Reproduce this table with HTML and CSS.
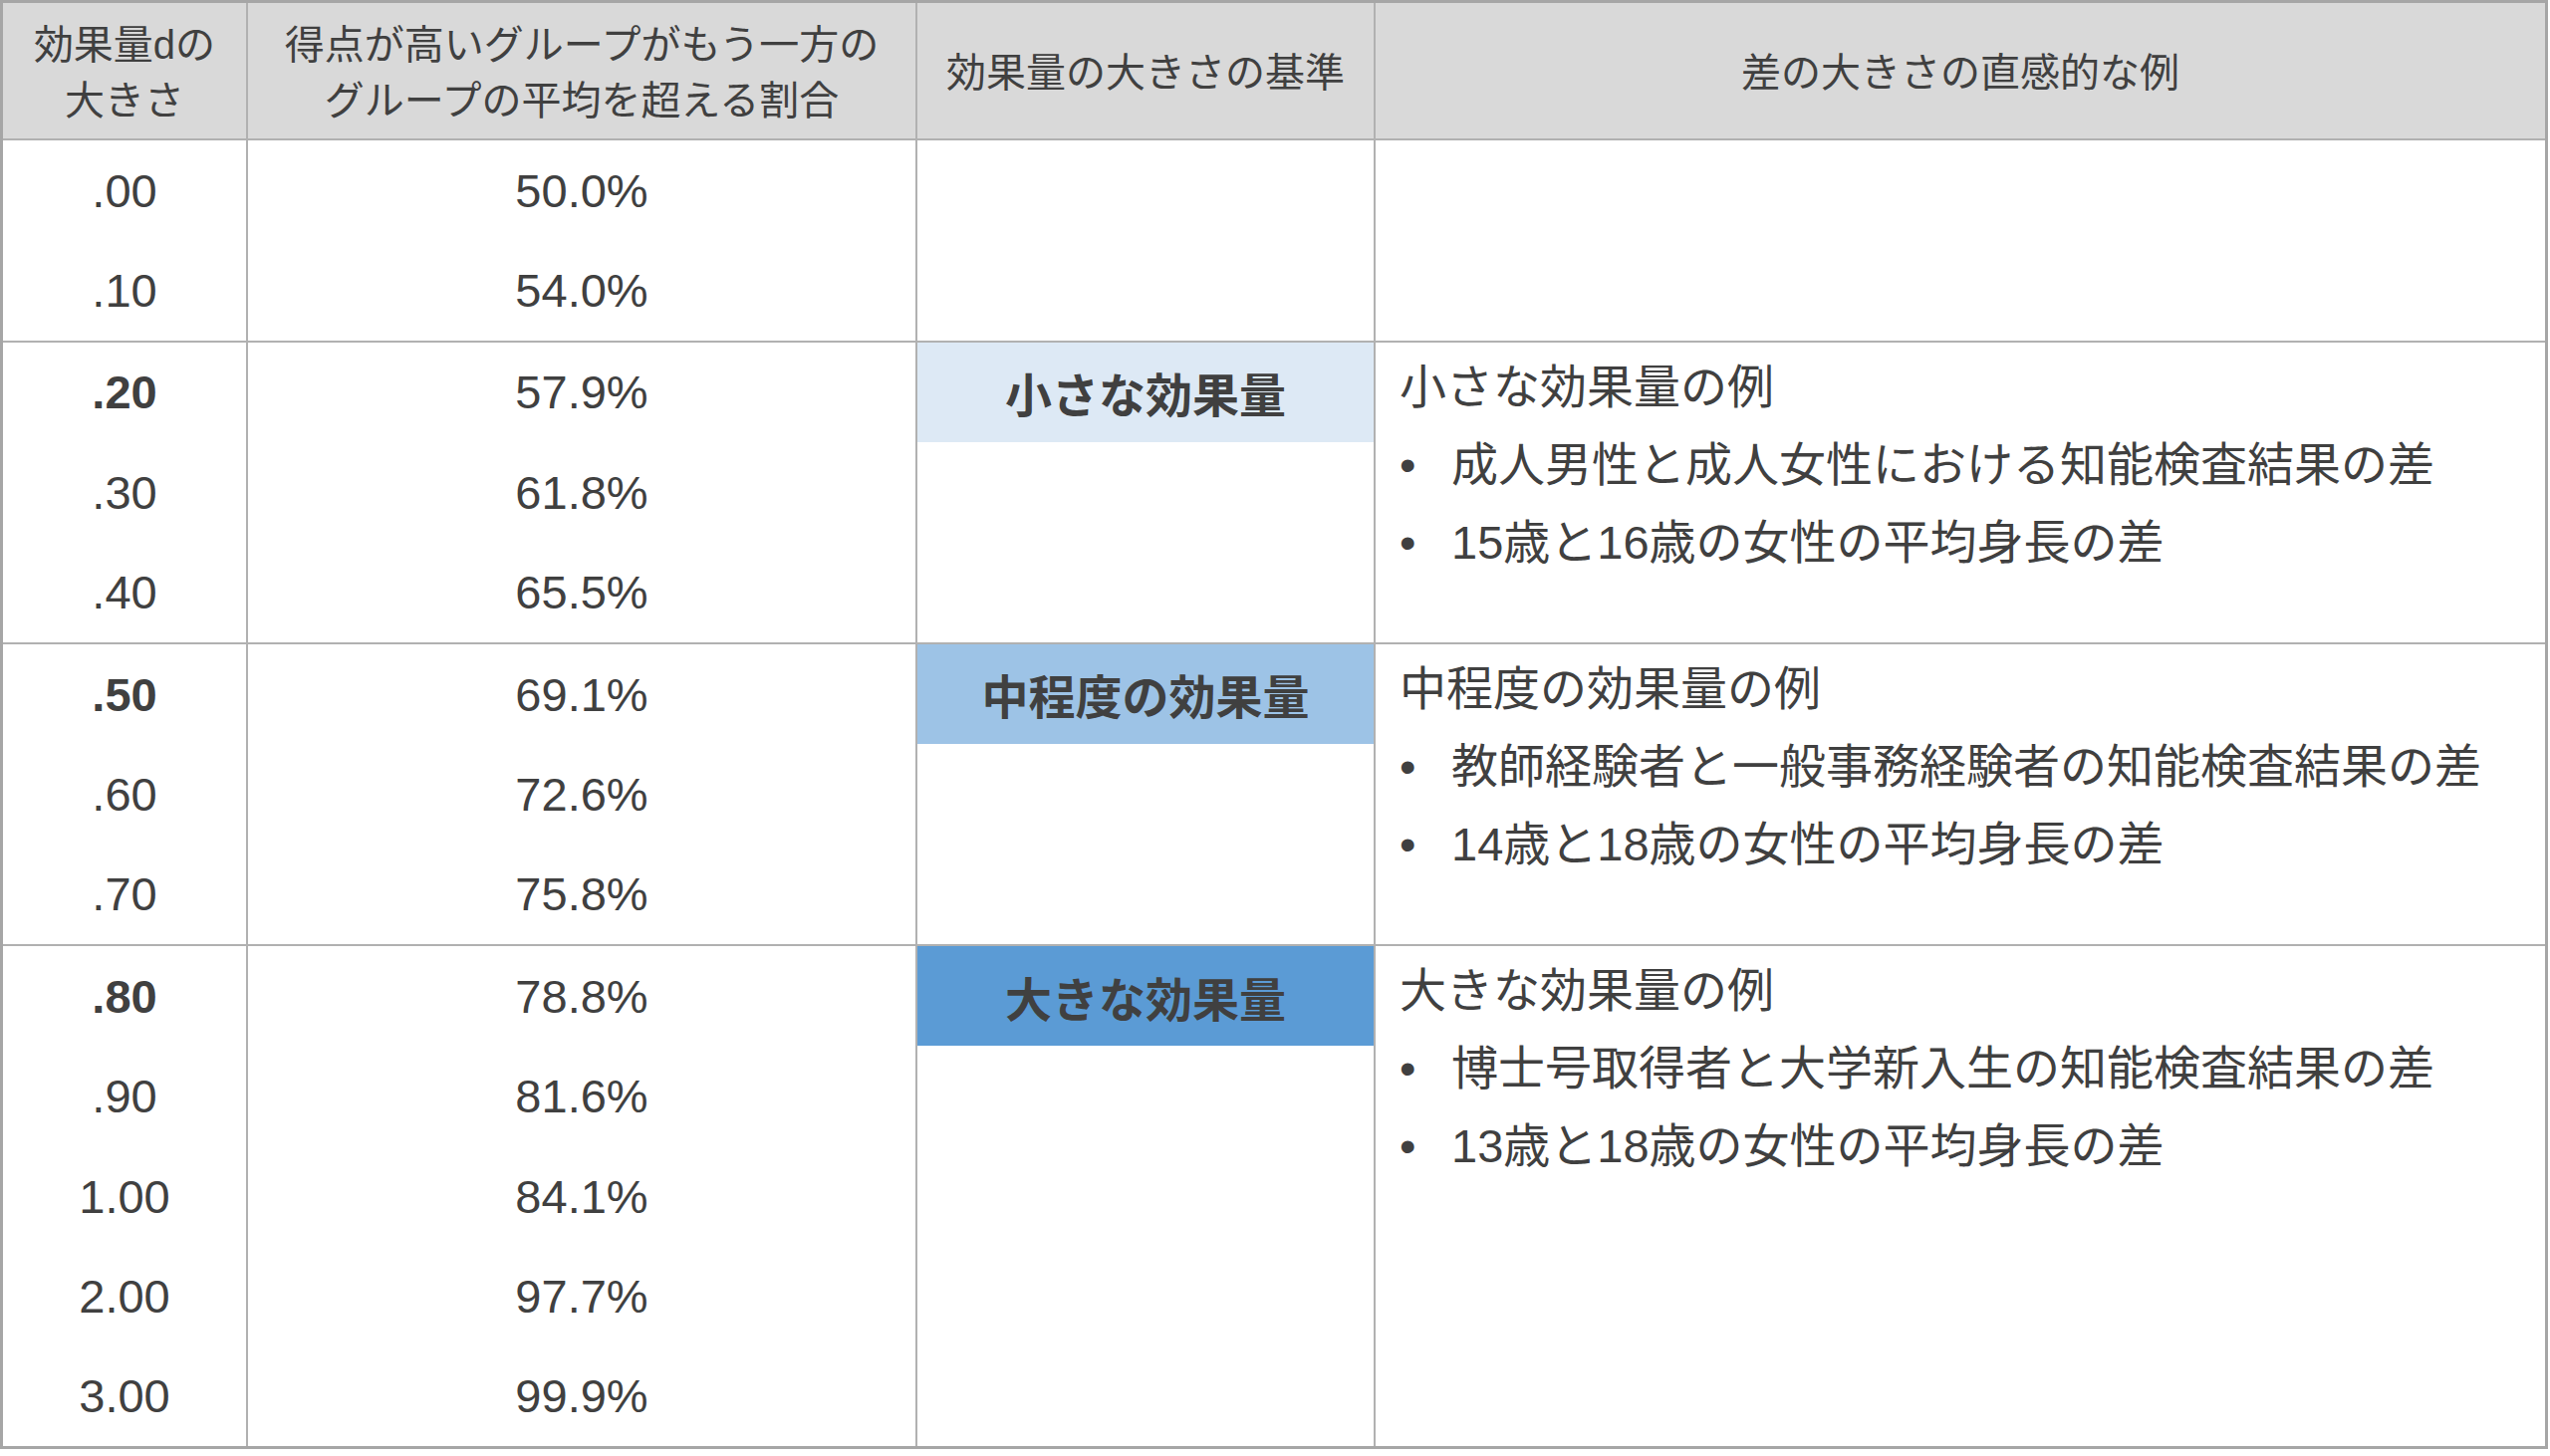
FILE: index.html
```html
<!DOCTYPE html>
<html lang="ja">
<head>
<meta charset="utf-8">
<title>効果量の大きさ</title>
<link rel="stylesheet" href="styles.css">
</head>
<body>
<div class="tbl">
  <div class="head">
    <div class="hc c1">効果量dの<br>大きさ</div>
    <div class="hc c2">得点が高いグループがもう一方の<br>グループの平均を超える割合</div>
    <div class="hc c3">効果量の大きさの基準</div>
    <div class="hc c4">差の大きさの直感的な例</div>
  </div>

  <div class="group">
    <div class="col c1"><div class="r">.00</div><div class="r">.10</div></div>
    <div class="col c2"><div class="r">50.0%</div><div class="r">54.0%</div></div>
    <div class="col c3"></div>
    <div class="col c4"></div>
  </div>

  <div class="group">
    <div class="col c1"><div class="r b">.20</div><div class="r">.30</div><div class="r">.40</div></div>
    <div class="col c2"><div class="r">57.9%</div><div class="r">61.8%</div><div class="r">65.5%</div></div>
    <div class="col c3"><div class="badge small">小さな効果量</div></div>
    <div class="col c4">
      <div class="ex-title">小さな効果量の例</div>
      <ul class="ex">
        <li><span class="dot">•</span><span>成人男性と成人女性における知能検査結果の差</span></li>
        <li><span class="dot">•</span><span>15歳と16歳の女性の平均身長の差</span></li>
      </ul>
    </div>
  </div>

  <div class="group">
    <div class="col c1"><div class="r b">.50</div><div class="r">.60</div><div class="r">.70</div></div>
    <div class="col c2"><div class="r">69.1%</div><div class="r">72.6%</div><div class="r">75.8%</div></div>
    <div class="col c3"><div class="badge medium">中程度の効果量</div></div>
    <div class="col c4">
      <div class="ex-title">中程度の効果量の例</div>
      <ul class="ex">
        <li><span class="dot">•</span><span>教師経験者と一般事務経験者の知能検査結果の差</span></li>
        <li><span class="dot">•</span><span>14歳と18歳の女性の平均身長の差</span></li>
      </ul>
    </div>
  </div>

  <div class="group">
    <div class="col c1"><div class="r b">.80</div><div class="r">.90</div><div class="r">1.00</div><div class="r">2.00</div><div class="r">3.00</div></div>
    <div class="col c2"><div class="r">78.8%</div><div class="r">81.6%</div><div class="r">84.1%</div><div class="r">97.7%</div><div class="r">99.9%</div></div>
    <div class="col c3"><div class="badge large">大きな効果量</div></div>
    <div class="col c4">
      <div class="ex-title">大きな効果量の例</div>
      <ul class="ex">
        <li><span class="dot">•</span><span>博士号取得者と大学新入生の知能検査結果の差</span></li>
        <li><span class="dot">•</span><span>13歳と18歳の女性の平均身長の差</span></li>
      </ul>
    </div>
  </div>
</div>
</body>
</html>
```

FILE: styles.css
```css
html, body {
  margin: 0;
  padding: 0;
  background: #ffffff;
}

body {
  font-family: "Liberation Sans", "Noto Sans CJK JP", sans-serif;
  color: #404040;
}

.tbl {
  box-sizing: border-box;
  width: 2558px;
  border: 3px solid #a6a6a6;
  background: #ffffff;
}

.head,
.group {
  display: grid;
  grid-template-columns: 244px 672px 460px 1fr;
}

.head {
  height: 136px;
  background: #d9d9d9;
}

.group {
  border-top: 2px solid #b1b1b1;
}

.head {
  border-bottom: 0;
}

.c2,
.c3,
.c4 {
  border-left: 2px solid #b1b1b1;
}

.hc {
  display: flex;
  align-items: center;
  justify-content: center;
  text-align: center;
  font-size: 40px;
  line-height: 56px;
  padding-top: 4px;
}

.col {
  display: flex;
  flex-direction: column;
}

.r {
  height: 100.4px;
  display: flex;
  align-items: center;
  justify-content: center;
  font-size: 47px;
}

.r.b {
  font-weight: bold;
}

.badge {
  height: 100px;
  display: flex;
  align-items: center;
  justify-content: center;
  font-size: 47px;
  font-weight: bold;
  color: #404040;
}

.badge.small {
  background: #dde9f5;
}

.badge.medium {
  background: #9dc3e6;
}

.badge.large {
  background: #5b9bd5;
}

.c4.col {
  padding: 6px 24px 0 24px;
  font-size: 47px;
  line-height: 78px;
}

.ex-title {
  white-space: nowrap;
}

.ex {
  list-style: none;
  margin: 0;
  padding: 0;
}

.ex li {
  display: flex;
  white-space: nowrap;
}

.dot {
  flex: none;
  width: 52px;
}
```
